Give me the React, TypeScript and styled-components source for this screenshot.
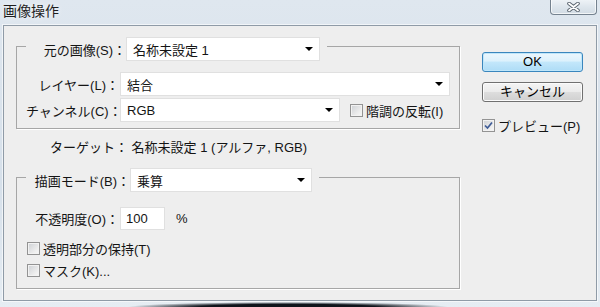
import React from 'react'
import styled, { createGlobalStyle } from 'styled-components'

const GlobalStyle = createGlobalStyle`
  html, body {
    margin: 0;
    padding: 0;
  }
  body {
    width: 600px;
    height: 307px;
    overflow: hidden;
    font-family: "Liberation Sans", "Noto Sans CJK JP", sans-serif;
    font-size: 13px;
    color: #141414;
  }
`

const Window = styled.div`
  width: 600px;
  height: 307px;
  box-sizing: border-box;
  display: flex;
  flex-direction: column;
  padding: 0 3px 6px;
  background:
    radial-gradient(160px 5px at 288px 100%, #0f141b 55%, rgba(15, 20, 27, 0) 100%),
    linear-gradient(180deg, #dfe7ef 0%, #d6e0ea 60%, #e6edf3 100%);
`

const TitleBar = styled.div`
  height: 25px;
  flex: none;
  display: flex;
  justify-content: space-between;
  align-items: flex-start;
`

const Title = styled.div`
  margin-top: 2px;
  font-size: 14px;
  line-height: 18px;
  color: #1e1e1e;
  text-shadow: 0 0 6px rgba(255, 255, 255, 0.9);
`

const CloseButton = styled.div`
  width: 47px;
  height: 16px;
  margin-top: -1px;
  box-sizing: border-box;
  display: flex;
  align-items: center;
  justify-content: center;
  border: 1px solid #75828f;
  border-top: none;
  border-radius: 0 0 4px 4px;
  background: linear-gradient(180deg, #f0f4f8 0%, #dde5ec 55%, #d2dbe4 100%);
  box-shadow: inset 0 0 0 1px rgba(255, 255, 255, 0.7);
`

const Client = styled.div`
  flex: 1;
  display: flex;
  border: 1px solid #8f9ba7;
  background: #eeeeee;
  box-shadow: 0 0 0 1px rgba(255, 255, 255, 0.6);
`

const LeftColumn = styled.div`
  flex: none;
  width: 444px;
  padding: 11px 0 0 12px;
`

const RightColumn = styled.div`
  flex: none;
  width: 101px;
  margin-left: 22px;
  padding-top: 26px;
  display: flex;
  flex-direction: column;
`

const GroupBox = styled.fieldset<{ $mt?: number; $pb: number }>`
  margin: ${p => p.$mt || 0}px 0 0;
  padding: 0 9px ${p => p.$pb}px;
  width: 444px;
  box-sizing: border-box;
  min-width: 0;
  border: 1px solid #a6a6a6;
  box-shadow: 1px 1px 0 #ffffff;
`

const Legend = styled.legend`
  margin: 0;
  padding: 0 7px 0 0;
  display: flex;
  align-items: flex-start;
`

const LegendInner = styled.div`
  display: flex;
  align-items: center;
  height: 24px;
  margin-bottom: -6px;
`

const GroupBody = styled.div<{ $pt: number }>`
  display: flex;
  flex-direction: column;
  gap: 2px;
  padding-top: ${p => p.$pt}px;
`

const Row = styled.div<{ $h?: number }>`
  display: flex;
  align-items: center;
  height: ${p => p.$h || 24}px;
`

const Label = styled.span<{ $w: number }>`
  flex: none;
  width: ${p => p.$w}px;
  text-align: right;
  white-space: nowrap;
`

const Select = styled.div<{ $w: number }>`
  flex: none;
  width: ${p => p.$w}px;
  height: 24px;
  box-sizing: border-box;
  display: flex;
  align-items: center;
  justify-content: space-between;
  padding: 0 6px;
  background: #ffffff;
  border: 1px solid #e0e0e0;
`

const Arrow = styled.span`
  width: 0;
  height: 0;
  border-left: 4px solid transparent;
  border-right: 4px solid transparent;
  border-top: 4px solid #000000;
`

const NumberBox = styled.div`
  flex: none;
  width: 45px;
  height: 23px;
  margin-left: 1px;
  box-sizing: border-box;
  display: flex;
  align-items: center;
  padding-left: 5px;
  background: #ffffff;
  border: 1px solid #e0e0e0;
`

const Unit = styled.span`
  margin-left: 11px;
`

const CheckLabel = styled.label<{ $ml?: number }>`
  display: flex;
  align-items: center;
  gap: 3px;
  margin-left: ${p => p.$ml || 0}px;
  white-space: nowrap;
`

const Box = styled.span`
  flex: none;
  width: 13px;
  height: 13px;
  box-sizing: border-box;
  display: flex;
  align-items: center;
  justify-content: center;
  border: 1px solid #939393;
  background: linear-gradient(135deg, #cdd0d4 0%, #eeeeee 70%, #f8f8f8 100%);
  box-shadow: inset 0 0 0 1px #f2f2f2;
`

const TargetRow = styled.div`
  margin-top: 10px;
  padding-left: 34px;
  line-height: 18px;
  white-space: nowrap;
`

const CheckList = styled.div`
  display: flex;
  flex-direction: column;
  gap: 2px;
  margin-top: 8px;
  padding-left: 1px;
`

const Button = styled.button<{ $primary?: boolean; $mt?: number }>`
  width: 101px;
  height: 20px;
  margin: ${p => p.$mt || 0}px 0 0;
  padding: 0;
  font-family: inherit;
  font-size: 13px;
  line-height: 18px;
  color: #000000;
  border-radius: 3px;
  border: 1px solid ${p => (p.$primary ? '#3a86bd' : '#707070')};
  background: ${p =>
    p.$primary
      ? 'linear-gradient(180deg, #ecf7fd 0%, #dcf1fc 45%, #c3e7fb 50%, #aedcf6 100%)'
      : 'linear-gradient(180deg, #f4f4f4 0%, #ebebeb 48%, #dddddd 52%, #d0d0d0 100%)'};
  box-shadow: inset 0 0 0 1px ${p => (p.$primary ? '#bfe6fa' : '#fbfbfb')};
`

const PreviewRow = styled.div`
  margin-top: 14px;
  height: 18px;
  display: flex;
  align-items: center;
`

const Check = ({ checked }: { checked?: boolean }) => (
  <Box>
    {checked && (
      <svg width="9" height="9" viewBox="0 0 9 9">
        <path d="M1 4.5 L3.5 7 L8 1.5" fill="none" stroke="#3f5c96" strokeWidth="1.7" />
      </svg>
    )}
  </Box>
)

const App = () => {
  return (
    <>
      <GlobalStyle />
      <Window>
        <TitleBar>
          <Title>画像操作</Title>
          <CloseButton>
            <svg width="13" height="10" viewBox="0 0 13 10">
              <path d="M2 1.5 L11 8.5 M11 1.5 L2 8.5" stroke="#59636e" strokeWidth="3.6" strokeLinecap="round" />
              <path d="M2 1.5 L11 8.5 M11 1.5 L2 8.5" stroke="#ffffff" strokeWidth="1.8" strokeLinecap="round" />
            </svg>
          </CloseButton>
        </TitleBar>
        <Client>
          <LeftColumn>
            <GroupBox $pb={6}>
              <Legend>
                <LegendInner>
                  <Label $w={100}>元の画像(S)：</Label>
                  <Select $w={194}>
                    <span>名称未設定 1</span>
                    <Arrow />
                  </Select>
                </LegendInner>
              </Legend>
              <GroupBody $pt={17}>
                <Row>
                  <Label $w={93}>レイヤー(L)：</Label>
                  <Select $w={330} style={{ marginLeft: 1 }}>
                    <span>結合</span>
                    <Arrow />
                  </Select>
                </Row>
                <Row>
                  <Label $w={93}>チャンネル(C)：</Label>
                  <Select $w={220} style={{ marginLeft: 1 }}>
                    <span>RGB</span>
                    <Arrow />
                  </Select>
                  <CheckLabel $ml={10}>
                    <Check />
                    階調の反転(I)
                  </CheckLabel>
                </Row>
              </GroupBody>
            </GroupBox>

            <TargetRow>ターゲット： 名称未設定 1 (アルファ, RGB)</TargetRow>

            <GroupBox $mt={11} $pb={8}>
              <Legend>
                <LegendInner>
                  <Label $w={104}>描画モード(B)：</Label>
                  <Select $w={182}>
                    <span>乗算</span>
                    <Arrow />
                  </Select>
                </LegendInner>
              </Legend>
              <GroupBody $pt={21}>
                <Row $h={23}>
                  <Label $w={93}>不透明度(O)：</Label>
                  <NumberBox>100</NumberBox>
                  <Unit>%</Unit>
                </Row>
              </GroupBody>
              <CheckList>
                <Row $h={20}>
                  <CheckLabel>
                    <Check />
                    透明部分の保持(T)
                  </CheckLabel>
                </Row>
                <Row $h={20}>
                  <CheckLabel>
                    <Check />
                    マスク(K)...
                  </CheckLabel>
                </Row>
              </CheckList>
            </GroupBox>
          </LeftColumn>

          <RightColumn>
            <Button $primary>OK</Button>
            <Button $mt={10}>キャンセル</Button>
            <PreviewRow>
              <CheckLabel>
                <Check checked />
                プレビュー(P)
              </CheckLabel>
            </PreviewRow>
          </RightColumn>
        </Client>
      </Window>
    </>
  )
}

export default App
